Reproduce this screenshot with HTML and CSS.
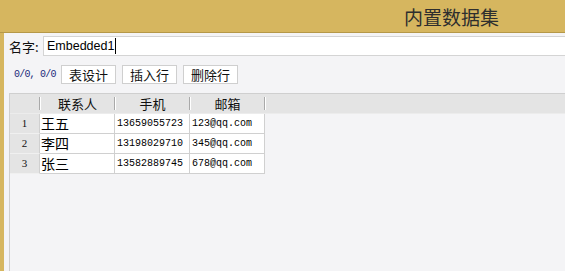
FILE: index.html
```html
<!DOCTYPE html>
<html lang="zh-CN">
<head>
    <meta charset="UTF-8" />
    <meta name="viewport" content="width=device-width, initial-scale=1" />
    <title>内置数据集</title>
    <link rel="stylesheet" href="styles.css">
</head>
<body>

<div class="header">
    <h2 class="title">内置数据集</h2>
</div>

<div class="page">
    <div class="strip"></div>

    <div class="main">
        <div class="name-row">
            <label class="name-label">名字:</label>
            <div class="name-input">Embedded1<span class="caret"></span></div>
        </div>

        <div class="toolbar">
            <span class="counter">0/0, 0/0</span>
            <button class="tool-btn">表设计</button>
            <button class="tool-btn">插入行</button>
            <button class="tool-btn">删除行</button>
        </div>

        <div class="grid">
            <div class="grid-head">
                <div class="hcell corner"></div>
                <div class="hcell">联系人</div>
                <div class="hcell">手机</div>
                <div class="hcell">邮箱</div>
            </div>

            <div class="grid-row">
                <div class="num">1</div>
                <div class="cell cn">王五</div>
                <div class="cell mono">13659055723</div>
                <div class="cell mono">123@qq.com</div>
            </div>
            <div class="grid-row">
                <div class="num">2</div>
                <div class="cell cn">李四</div>
                <div class="cell mono">13198029710</div>
                <div class="cell mono">345@qq.com</div>
            </div>
            <div class="grid-row">
                <div class="num">3</div>
                <div class="cell cn">张三</div>
                <div class="cell mono">13582889745</div>
                <div class="cell mono">678@qq.com</div>
            </div>
        </div>
    </div>
</div>

</body>
</html>
```

FILE: styles.css
```css
* {
    box-sizing: border-box;
    margin: 0;
    padding: 0;
}
html, body {
    height: 100%;
}
body {
    font-family: "Liberation Sans", "Noto Sans CJK SC", sans-serif;
    background: #f4f4f6;
    color: #000;
    overflow: hidden;
}

/* cabecalho dourado */
.header {
    height: 33px;
    background: #d6b65f;
    border-bottom: 1px solid #b59848;
    display: flex;
    justify-content: flex-end;
    align-items: center;
    padding-right: 66px;
}
.title {
    font-family: "Noto Sans CJK SC", sans-serif;
    font-size: 19px;
    font-weight: 400;
    color: #2e2e2e;
    line-height: 1;
}

.page {
    display: flex;
    height: calc(100% - 33px);
}
.strip {
    width: 4px;
    background: #d6b65f;
}
.main {
    flex: 1;
    display: flex;
    flex-direction: column;
    min-width: 0;
}

/* linha do nome */
.name-row {
    display: flex;
    align-items: center;
    margin-top: 3px;
    padding-left: 5px;
    height: 20px;
}
.name-label {
    font-family: "Noto Sans CJK SC", sans-serif;
    font-size: 13px;
    width: 34px;
    color: #111;
}
.name-input {
    flex: 1;
    height: 20px;
    background: #fff;
    border: 1px solid #d4d4d4;
    border-right: none;
    padding-left: 3px;
    font-size: 12.5px;
    display: flex;
    align-items: center;
}
.caret {
    display: inline-block;
    width: 1px;
    height: 16px;
    background: #000;
    margin-left: 1px;
}

/* barra de botoes */
.toolbar {
    display: flex;
    align-items: center;
    gap: 6px;
    margin-top: 9px;
    padding-left: 10px;
}
.counter {
    width: 41px;
    white-space: nowrap;
    font-family: "Liberation Mono", monospace;
    font-size: 10px;
    letter-spacing: -0.8px;
    color: #1b2a7a;
}
.tool-btn {
    width: 55px;
    height: 19px;
    background: #fff;
    border: 1px solid #cfcfcf;
    font-family: "Noto Sans CJK SC", sans-serif;
    font-size: 13px;
    line-height: 17px;
    color: #111;
}

/* tabela */
.grid {
    flex: 1;
    margin-top: 9px;
    margin-left: 5px;
    border-left: 1px solid #cfcfcf;
    border-top: 1px solid #cfcfcf;
}
.grid-head {
    display: flex;
    height: 20px;
    background: #e4e4e4;
    border-bottom: 1px solid #ececec;
}
.hcell {
    position: relative;
    width: 75px;
    text-align: center;
    font-family: "Noto Sans CJK SC", sans-serif;
    font-size: 13px;
    line-height: 19px;
    color: #111;
}
.hcell.corner {
    width: 30px;
}
.hcell::after {
    content: "";
    position: absolute;
    right: 0;
    top: 3px;
    bottom: 3px;
    width: 1px;
    background: #a9a9a9;
    box-shadow: 1px 0 0 #fff;
}

.grid-row {
    display: flex;
    height: 20px;
}
.num,
.cell {
    border-right: 1px solid #d0d0d0;
    border-bottom: 1px solid #d0d0d0;
}
.num {
    width: 30px;
    background: #e4e4e4;
    border-bottom-color: #f0f0f0;
    text-align: center;
    font-family: "Liberation Serif", serif;
    font-size: 11px;
    line-height: 19px;
    color: #111;
}
.cell {
    width: 75px;
    background: #fff;
    padding-left: 2px;
    line-height: 19px;
    white-space: nowrap;
}
.cell.cn {
    padding-left: 1px;
    font-family: "Noto Sans CJK SC", sans-serif;
    font-size: 14px;
}
.cell.mono {
    font-family: "Liberation Mono", monospace;
    font-size: 10px;
    color: #000;
}
```
